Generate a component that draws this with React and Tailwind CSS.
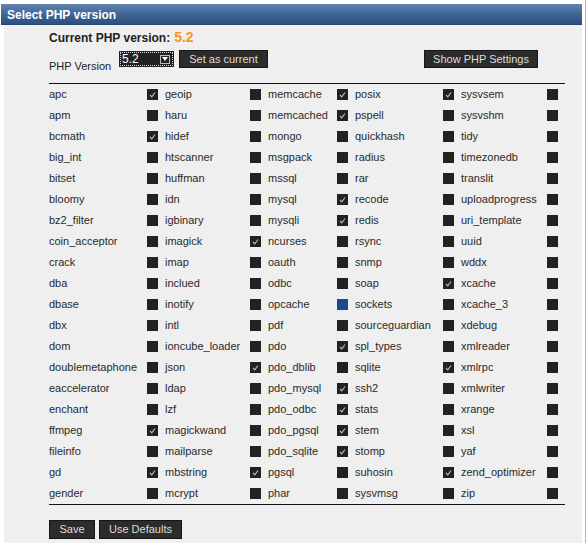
import React from "react";

// [name, state] — state: 0 off, 1 on, 2 focused
const rows = [
  [["apc", 1], ["geoip", 0], ["memcache", 1], ["posix", 1], ["sysvsem", 0]],
  [["apm", 0], ["haru", 0], ["memcached", 1], ["pspell", 0], ["sysvshm", 0]],
  [["bcmath", 1], ["hidef", 0], ["mongo", 0], ["quickhash", 0], ["tidy", 0]],
  [["big_int", 0], ["htscanner", 0], ["msgpack", 0], ["radius", 0], ["timezonedb", 0]],
  [["bitset", 0], ["huffman", 0], ["mssql", 0], ["rar", 0], ["translit", 0]],
  [["bloomy", 0], ["idn", 0], ["mysql", 1], ["recode", 0], ["uploadprogress", 0]],
  [["bz2_filter", 0], ["igbinary", 0], ["mysqli", 1], ["redis", 0], ["uri_template", 0]],
  [["coin_acceptor", 0], ["imagick", 1], ["ncurses", 0], ["rsync", 0], ["uuid", 0]],
  [["crack", 0], ["imap", 0], ["oauth", 0], ["snmp", 0], ["wddx", 0]],
  [["dba", 0], ["inclued", 0], ["odbc", 0], ["soap", 1], ["xcache", 0]],
  [["dbase", 0], ["inotify", 0], ["opcache", 2], ["sockets", 0], ["xcache_3", 0]],
  [["dbx", 0], ["intl", 0], ["pdf", 0], ["sourceguardian", 0], ["xdebug", 0]],
  [["dom", 0], ["ioncube_loader", 0], ["pdo", 1], ["spl_types", 0], ["xmlreader", 0]],
  [["doublemetaphone", 0], ["json", 1], ["pdo_dblib", 0], ["sqlite", 1], ["xmlrpc", 0]],
  [["eaccelerator", 0], ["ldap", 0], ["pdo_mysql", 1], ["ssh2", 0], ["xmlwriter", 0]],
  [["enchant", 0], ["lzf", 0], ["pdo_odbc", 1], ["stats", 0], ["xrange", 0]],
  [["ffmpeg", 1], ["magickwand", 0], ["pdo_pgsql", 1], ["stem", 0], ["xsl", 0]],
  [["fileinfo", 0], ["mailparse", 0], ["pdo_sqlite", 1], ["stomp", 0], ["yaf", 0]],
  [["gd", 1], ["mbstring", 1], ["pgsql", 0], ["suhosin", 1], ["zend_optimizer", 0]],
  [["gender", 0], ["mcrypt", 0], ["phar", 0], ["sysvmsg", 0], ["zip", 0]],
];

function Box({ state }) {
  return (
    <span
      className={`w-[11px] h-[11px] flex items-center justify-center ${
        state === 2 ? "bg-[#1d4a8c]" : "bg-[#222222]"
      }`}
    >
      {state === 1 && (
        <svg width="11" height="11" viewBox="0 0 11 11">
          <polyline points="3,6 4.8,7.8 8,3.5" fill="none" stroke="#bdbdbd" strokeWidth="1.1" />
        </svg>
      )}
    </span>
  );
}

function DarkButton({ children, className = "" }) {
  return (
    <button className={`h-[18px] bg-[#2c2c2c] border border-[#161616] text-[#dedede] text-[11px] leading-none px-0 whitespace-nowrap flex items-center justify-center ${className}`}>
      {children}
    </button>
  );
}

export default function App() {
  return (
    <div className="w-[587px] h-[543px] bg-white flex font-['Liberation_Sans',Arial,sans-serif] overflow-hidden">
      <div className="w-[581px] ml-[1px] mt-[4px] flex flex-col">
        {/* title bar */}
        <div className="h-[21px] bg-gradient-to-b from-[#6285ae] via-[#3f6696] to-[#2c5081] border-b border-[#27466f] flex items-center pl-[6px] pt-[1px]">
          <span className="text-white text-[12px] font-bold">Select PHP version</span>
        </div>

        <div className="flex-1 ml-[3px] bg-[#efefef] pl-[45px] pt-[4px]">
          <div className="w-[516px]">
            <div className="flex items-baseline h-[16px] leading-[16px]">
              <span className="text-[12px] font-bold text-[#222]">Current PHP version:</span>
              <span className="ml-[4px] text-[14px] font-bold text-[#f39a1e]">5.2</span>
            </div>

            <div className="flex items-start mt-[5px] h-[18px]">
              <span className="w-[70px] mt-[10px] text-[11px] leading-[13px] text-[#222]">PHP Version</span>
              <div className="mt-[1px] w-[55px] h-[16px] bg-[#222] p-[1px]">
                <div className="h-full border border-dotted border-[#d8d8d8] flex items-center justify-between pl-[1px] pr-[2px]">
                  <span className="text-white text-[12px] leading-none">5.2</span>
                  <span className="w-[10px] h-[9px] border border-[#bbb] flex items-center justify-center">
                    <svg width="6" height="4" viewBox="0 0 6 4">
                      <polygon points="0,0 6,0 3,4" fill="#fff" />
                    </svg>
                  </span>
                </div>
              </div>
              <DarkButton className="ml-[5px] w-[89px] h-[17px]">Set as current</DarkButton>
              <DarkButton className="ml-auto mr-[27px] w-[114px]">Show PHP Settings</DarkButton>
            </div>

            <div className="mt-[15px] border-t border-[#111]">
              <div className="grid grid-cols-[98px_18px_85px_18px_69px_18px_88px_18px_86px_18px]">
                {rows.map((row, i) =>
                  row.map(([name, state], j) => (
                    <React.Fragment key={`${i}-${j}`}>
                      <div className="h-[21px] flex items-center text-[11px] text-[#2a2a2a] whitespace-nowrap">{name}</div>
                      <div className="h-[21px] flex items-center">
                        <Box state={state} />
                      </div>
                    </React.Fragment>
                  ))
                )}
              </div>
            </div>

            <div className="border-t border-[#111]" />

            <div className="flex gap-[4px] mt-[15px]">
              <DarkButton className="w-[46px] h-[19px]">Save</DarkButton>
              <DarkButton className="w-[83px] h-[19px]">Use Defaults</DarkButton>
            </div>
          </div>
        </div>
      </div>
      <div className="ml-[3px] w-[1px] h-full bg-[#9fb6d3]" />
    </div>
  );
}
